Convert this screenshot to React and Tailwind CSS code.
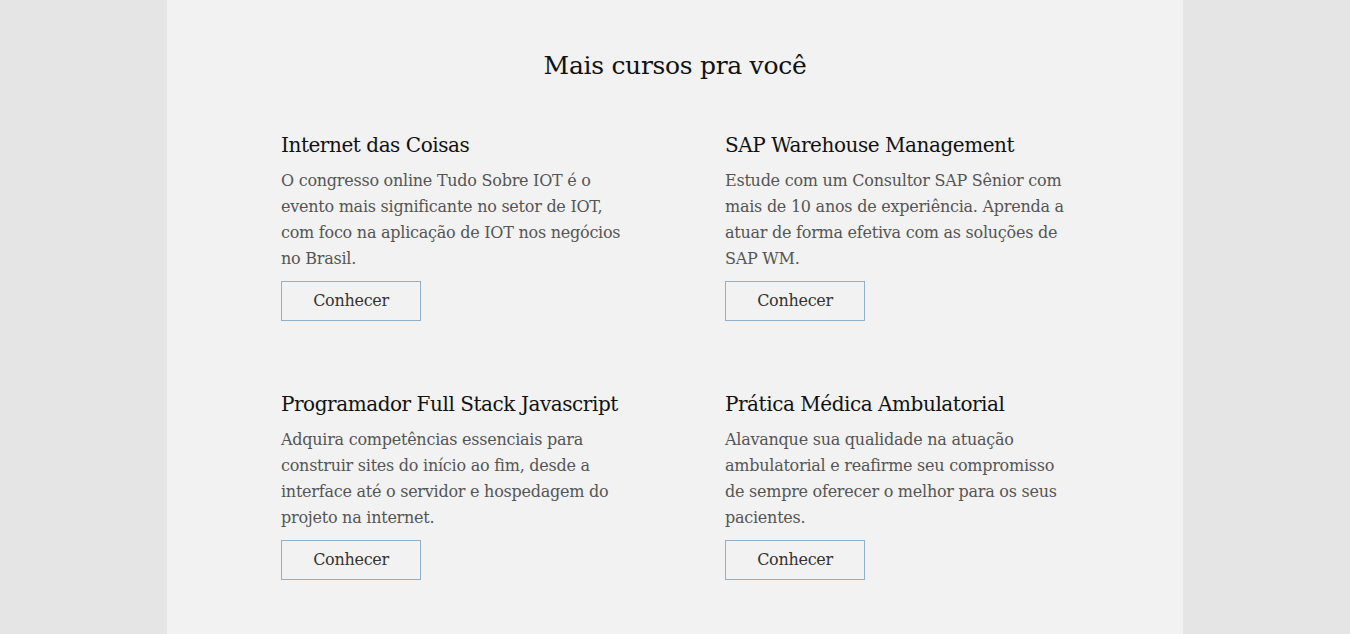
import React from 'react';

const courses = [
  {
    title: 'Internet das Coisas',
    text: 'O congresso online Tudo Sobre IOT é o evento mais significante no setor de IOT, com foco na aplicação de IOT nos negócios no Brasil.',
  },
  {
    title: 'SAP Warehouse Management',
    text: 'Estude com um Consultor SAP Sênior com mais de 10 anos de experiência. Aprenda a atuar de forma efetiva com as soluções de SAP WM.',
  },
  {
    title: 'Programador Full Stack Javascript',
    text: 'Adquira competências essenciais para construir sites do início ao fim, desde a interface até o servidor e hospedagem do projeto na internet.',
  },
  {
    title: 'Prática Médica Ambulatorial',
    text: 'Alavanque sua qualidade na atuação ambulatorial e reafirme seu compromisso de sempre oferecer o melhor para os seus pacientes.',
  },
];

const CourseCard = ({ course }) => (
  <div className="flex flex-col items-start">
    <h3 className="text-[20px] leading-[30px] tracking-[-0.45px] text-[#111]">{course.title}</h3>
    <p className="mt-[8px] text-[16px] leading-[26px] tracking-[-0.25px] text-[#555]">{course.text}</p>
    <button className="mt-[9px] w-[140px] h-[40px] border border-[#8fb0c8] text-[16px] tracking-[-0.3px] text-[#333]">
      Conhecer
    </button>
  </div>
);

export default function App() {
  return (
    <div
      className="min-h-screen bg-[#e5e5e5]"
      style={{ fontFamily: '"DejaVu Serif", "Liberation Serif", serif' }}
    >
      <div className="mx-auto w-[1016px] min-h-screen bg-[#f2f2f2] pt-[48px] pb-[40px]">
        <h2 className="text-center text-[25px] leading-[36px] tracking-[-0.3px] text-[#111]">Mais cursos pra você</h2>
        <div className="mx-auto mt-[46px] w-[788px] grid grid-cols-2 gap-x-[100px] gap-y-[68px]">
          {courses.map((c) => (
            <CourseCard key={c.title} course={c} />
          ))}
        </div>
      </div>
    </div>
  );
}
